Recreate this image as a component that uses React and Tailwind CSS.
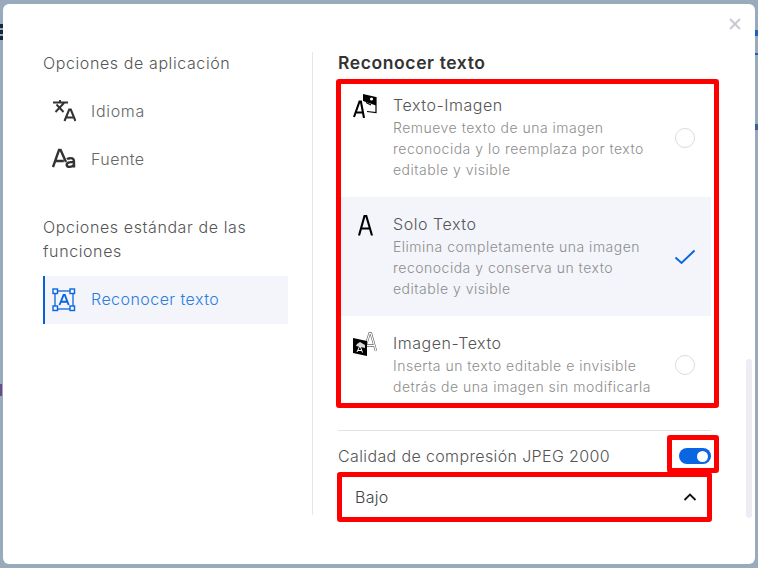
const font = { fontFamily: 'Inter, "Noto Sans", sans-serif' };

function TranslateIcon() {
  return (
    <svg width="24" height="24" viewBox="0 0 24 24" className="text-[#333]">
      <path d="M1 3.5h15M8 1v2.5M3.5 13 12 4M4.5 5.5 11.5 13" fill="none" stroke="currentColor" strokeWidth="1.9" />
      <path d="M12.5 22 17.2 10.5h1.6L23.5 22M14.2 18.5h7.6" fill="none" stroke="currentColor" strokeWidth="2.1" />
    </svg>
  );
}

function FontIcon() {
  return (
    <svg width="24" height="22" viewBox="0 0 24 22" className="text-[#333]">
      <path d="M1 19 7 2h1.6L14 14M3.2 13h8.6" fill="none" stroke="currentColor" strokeWidth="2.4" />
      <path d="M15 11.2c1-1 5-1.7 6.4 0 .9 1.2.6 3 .6 8.3M22 14.2c-3-.3-7.3-.2-7.3 2.5 0 2.8 5.5 3 7.3-.2" fill="none" stroke="currentColor" strokeWidth="2.4" />
    </svg>
  );
}

function OcrIcon() {
  return (
    <svg width="24" height="24" viewBox="0 0 24 24" className="text-[#0a66e0]">
      <rect x="3" y="3" width="18" height="18" fill="none" stroke="currentColor" strokeWidth="1.3" />
      {[[1, 1], [18, 1], [1, 18], [18, 18]].map(([x, y]) => (
        <rect key={x + '-' + y} x={x} y={y} width="4.5" height="4.5" fill="#f3f5fa" stroke="currentColor" strokeWidth="1.4" />
      ))}
      <path d="M7.5 17 11.6 7h1.2l3.9 10M9 13.8h6" fill="none" stroke="currentColor" strokeWidth="1.9" />
    </svg>
  );
}

function TextImageIcon() {
  return (
    <svg width="24" height="24" viewBox="0 0 24 24" className="block">
      <path d="M1 23 6.5 7.5h1.4L11 24M2.8 18.5h7" fill="none" stroke="#000" strokeWidth="2.1" />
      <path d="M10 0 23 3v8.5L10 7z" fill="#000" />
      <circle cx="18.5" cy="5" r="1.6" fill="#fff" />
      <path d="M13 8.5 18 11M23 3v15.5l-9-1" fill="none" stroke="#000" strokeWidth="1.2" />
    </svg>
  );
}

function OnlyTextIcon() {
  return (
    <svg width="15" height="21" viewBox="0 0 15 21" className="block">
      <path d="M1 20.5 6.5 1h1.8L14 20.5M3 13.5h9" fill="none" stroke="#000" strokeWidth="2.1" />
    </svg>
  );
}

function ImageTextIcon() {
  return (
    <svg width="24" height="24" viewBox="0 0 24 24" className="block">
      <path d="M11 19 16.5 1.5h1.5L23 19M13.5 13.5h7.5" fill="none" stroke="#666" strokeWidth="2.4" />
      <path d="M11 19 16.5 1.5h1.5L23 19M13.5 13.5h7.5" fill="none" stroke="#fff" strokeWidth="1.1" />
      <path d="M0 6 14 9v15L0 21z" fill="#000" />
      <path d="M4 12 7 10l5 3v3L3 14z" fill="#fff" opacity="0.85" />
      <path d="M4 20 6.5 14.5h.8L9.5 20.5M5 18.5h4" fill="none" stroke="#fff" strokeWidth="1" />
    </svg>
  );
}

const options = [
  {
    title: 'Texto-Imagen',
    lines: ['Remueve texto de una imagen', 'reconocida y lo reemplaza por texto', 'editable y visible'],
    icon: TextImageIcon,
    rowClass: 'pt-[11px] pb-[17px]',
    iconClass: 'mt-[-1px] ml-[12px] mr-[16px]',
  },
  {
    title: 'Solo Texto',
    lines: ['Elimina completamente una imagen', 'reconocida y conserva un texto', 'editable y visible'],
    icon: OnlyTextIcon,
    selected: true,
    rowClass: 'pt-[17px] pb-[17px] bg-[#f3f5fa]',
    iconClass: 'mt-[1px] ml-[17px] mr-[20px]',
  },
  {
    title: 'Imagen-Texto',
    lines: ['Inserta un texto editable e invisible', 'detrás de una imagen sin modificarla'],
    icon: ImageTextIcon,
    rowClass: 'pt-[17px] pb-[6px]',
    iconClass: 'mt-[-1px] ml-[12px] mr-[16px]',
  },
];

function OptionRow({ option }) {
  const Icon = option.icon;
  return (
    <div className={`flex items-start w-[370px] ${option.rowClass}`}>
      <div className={`shrink-0 ${option.iconClass}`}>
        <Icon />
      </div>
      <div className="w-[275px] shrink-0">
        <p className="mb-[1px] text-[16px] leading-[21px] font-light text-[#555] tracking-[0.55px]">{option.title}</p>
        {option.lines.map((line) => (
          <p key={line} className="text-[14px] leading-[21px] font-light text-[#8d8d8d] tracking-[0.5px] whitespace-nowrap">{line}</p>
        ))}
      </div>
      <div className="w-[33px] shrink-0 self-center flex justify-center">
        {option.selected ? (
          <svg width="22" height="16" viewBox="0 0 22 16">
            <path d="M1.5 8.5 7.5 14 20.5 1.5" fill="none" stroke="#0a66e0" strokeWidth="2" />
          </svg>
        ) : (
          <span className="block w-5 h-5 rounded-full border border-[#dcdcdc] bg-white" />
        )}
      </div>
    </div>
  );
}

export default function App() {
  return (
    <div className="relative w-[758px] h-[568px] overflow-hidden bg-[#9aaabd] pt-[4px] pl-[3px]" style={font}>
      {/* page behind the dialog */}
      <span className="absolute left-0 top-[24px] w-[3px] h-[4px] bg-[#16283f]" />
      <span className="absolute left-0 top-[30px] w-[3px] h-[4px] bg-[#16283f]" />
      <span className="absolute left-0 top-[36px] w-[3px] h-[4px] bg-[#16283f]" />
      <span className="absolute left-0 top-[384px] w-[2px] h-[12px] bg-[#6a4a8a]" />
      <span className="absolute right-0 top-[30px] w-[3px] h-[6px] bg-[#1f5fc0]" />
      <span className="absolute right-0 top-[53px] w-[3px] h-[2px] bg-[#1f5fc0]" />
      <span className="absolute right-0 top-[124px] w-[3px] h-[6px] bg-[#3a5f90]" />

      <div className="relative flex w-[752px] h-[560px] rounded-md bg-white pl-[40px] pt-[48px]">
        <button className="absolute right-[14px] top-[14px]">
          <svg width="12" height="12" viewBox="0 0 12 12" className="block">
            <path d="M1 1 11 11M11 1 1 11" stroke="#c6cad3" strokeWidth="2" />
          </svg>
        </button>
        <div className="absolute left-[743px] top-[355px] w-[6px] h-[159px] rounded-[3px] bg-[#eceef3]" />

        {/* left menu */}
        <div className="w-[270px] h-[463px] shrink-0 border-r border-[#e4e6eb] pr-[24px]">
          <p className="-mt-px mb-[12px] text-[16px] leading-[24px] font-light text-[#555] tracking-[0.6px]">Opciones de aplicación</p>
          <div className="flex items-center h-12 text-[16px] font-light text-[#666] tracking-[0.7px]">
            <span className="w-[48px] pl-[9px]"><TranslateIcon /></span>
            Idioma
          </div>
          <div className="flex items-center h-12 text-[16px] font-light text-[#666] tracking-[0.45px]">
            <span className="w-[48px] pl-[9px]"><FontIcon /></span>
            Fuente
          </div>
          <p className="mt-[32px] mb-[13px] text-[16px] leading-[24px] font-light text-[#555] tracking-[0.6px]">Opciones estándar de las funciones</p>
          <div className="flex items-center h-12 pb-[2px] bg-[#f3f5fa] border-l-2 border-[#0a5fd8] text-[16px] font-light text-[#2a7de1] tracking-[0.45px]">
            <span className="w-[46px] pl-[7px] pt-[2px]"><OcrIcon /></span>
            Reconocer texto
          </div>
        </div>

        {/* right panel */}
        <div className="ml-[25px] w-[373px]">
          <h2 className="-mt-px h-[28px] text-[17.5px] leading-[24px] font-semibold text-[#333] tracking-[0.6px]">Reconocer texto</h2>
          <div className="-ml-[2px] w-[383px] border-[5px] border-[#ff0000] rounded-[3px]">
            {options.map((option) => (
              <OptionRow key={option.title} option={option} />
            ))}
          </div>
          <div className="mt-[22px] border-t border-[#e2e2e2] h-[5px]" />
          <div className="flex items-start justify-between h-[38px]">
            <span className="mt-[9px] text-[16px] leading-[24px] font-light text-[#555] tracking-[0.37px] whitespace-nowrap">Calidad de compresión JPEG 2000</span>
            <div className="-mr-[8px] w-[52px] h-[38px] border-[5px] border-[#ff0000] rounded-[3px] pl-[7px] pt-[8px] shrink-0">
              <span className="flex items-center justify-end w-[32px] h-4 rounded-full bg-[#0a66e0] pr-[3px]">
                <span className="block w-[11px] h-[11px] rounded-full bg-white" />
              </span>
            </div>
          </div>
          <div className="-mt-px -ml-[1px] w-[375px] h-[50px] border-[5px] border-[#ff0000] rounded-[3px] flex items-center justify-between pl-[13px] pr-[10px]">
            <span className="-mt-px text-[16px] font-light text-[#444] tracking-[0.3px]">Bajo</span>
            <svg width="14" height="8" viewBox="0 0 14 8">
              <path d="M1.5 7 7 1.5 12.5 7" fill="none" stroke="#111" strokeWidth="1.8" />
            </svg>
          </div>
        </div>
      </div>
    </div>
  );
}
